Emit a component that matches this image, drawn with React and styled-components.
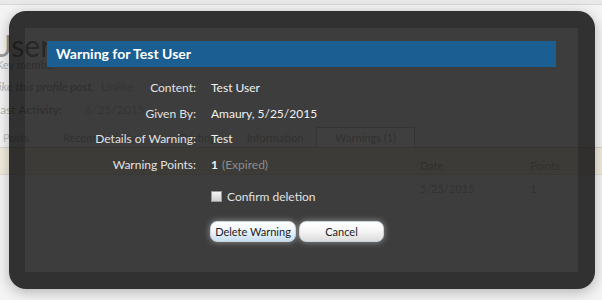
import React from 'react';
import styled, { createGlobalStyle } from 'styled-components';

const GlobalStyle = createGlobalStyle`
  html, body {
    margin: 0;
    padding: 0;
    background: #f4f4f4;
    font-family: Lato, "Liberation Sans", sans-serif;
  }
`;

const Page = styled.div`
  position: relative;
  width: 602px;
  height: 300px;
  overflow: hidden;
`;

const TopStrip = styled.div`
  height: 4px;
  background: #e9e9e9;
  border-bottom: 1px solid #d6d6d6;
`;

const Profile = styled.div`
  display: flex;
  flex-direction: column;
  padding-top: 27px;
  color: #b8b8b8;
`;

const UserName = styled.h1`
  margin: 0 0 0 -10px;
  font-size: 30px;
  font-weight: 400;
  line-height: 26px;
  color: #9a9a9a;
`;

const Meta = styled.div`
  margin-left: ${(p) => p.$shift || 0}px;
  margin-bottom: ${(p) => p.$bottom || 0}px;
  font-size: ${(p) => p.$size || 12}px;
  line-height: ${(p) => p.$lh || 23}px;
  font-style: ${(p) => (p.$italic ? 'italic' : 'normal')};
  color: #b4b4b4;

  span {
    margin-left: 6px;
    color: #cfcfcf;
    font-style: normal;
  }
`;

const Tabs = styled.div`
  display: flex;
  align-items: flex-end;
  margin-top: 6px;
  height: 20px;
  border-bottom: 1px solid #d4d4d4;
`;

const Tab = styled.div`
  padding: 0 ${(p) => p.$pad || 18}px;
  height: 19px;
  line-height: 19px;
  font-size: 11px;
  color: #c2c2c2;
  border: 1px solid ${(p) => (p.$active ? '#d2d2d2' : 'transparent')};
  border-bottom: none;
  background: ${(p) => (p.$active ? '#fafafa' : 'transparent')};
`;

const Band = styled.div`
  display: grid;
  grid-template-columns: 420px 110px 1fr;
  height: 27px;
  align-items: end;
  padding-bottom: 2px;
  box-sizing: border-box;
  background: #f2ecde;
  border-bottom: 1px solid #e4dfd2;
  font-size: 11px;
  color: #c2bcad;
`;

const DataRow = styled.div`
  display: grid;
  grid-template-columns: 420px 110px 1fr;
  height: 26px;
  align-items: center;
  font-size: 11px;
  color: #c6c6c6;
`;

const Overlay = styled.div`
  position: absolute;
  left: 9px;
  top: 11px;
  width: 586px;
  height: 278px;
  box-sizing: border-box;
  border: 17px solid rgba(0, 0, 0, 0.8);
  border-left-width: 16px;
  border-radius: 17px;
  background: rgba(0, 0, 0, 0.75);
  background-clip: padding-box;
  box-shadow: 0 3px 14px rgba(0, 0, 0, 0.28);
  padding: 13px 22px 0 22px;
`;

const TitleBar = styled.h2`
  margin: 0;
  height: 26px;
  line-height: 26px;
  padding-left: 9px;
  background: #1a5e92;
  color: #fff;
  font-size: 14px;
  font-weight: 700;
`;

const Fields = styled.dl`
  display: grid;
  grid-template-columns: 149px 1fr;
  column-gap: 15px;
  grid-auto-rows: 25.5px;
  align-items: center;
  margin: 8px 0 0;
  font-size: 12px;
`;

const Label = styled.dt`
  text-align: right;
  color: #e2e2e2;
`;

const Value = styled.dd`
  margin: 0;
  color: #f2f2f2;

  b {
    font-weight: 700;
  }

  span {
    margin-left: 4px;
    color: #8c8c8c;
  }
`;

const Confirm = styled.label`
  display: flex;
  align-items: center;
  gap: 5px;
  margin: 10px 0 0 164px;
  height: 18px;
  font-size: 12px;
  color: #e0e0e0;
`;

const Box = styled.span`
  width: 9px;
  height: 9px;
  background: linear-gradient(#f4f4f4, #cfcfcf);
  border: 1px solid #9a9a9a;
`;

const Buttons = styled.div`
  display: flex;
  gap: 3px;
  margin: 16px 0 0 163px;
`;

const Button = styled.button`
  width: ${(p) => p.$w}px;
  height: 21px;
  padding: 0;
  border: 1px solid #c8d2da;
  border-radius: 7px;
  background: ${(p) =>
    p.$primary
      ? 'linear-gradient(#ffffff, #eef5fb 45%, #c9def0)'
      : 'linear-gradient(#ffffff, #f6f6f6 45%, #dcdcdc)'};
  box-shadow: 0 0 6px rgba(255, 255, 255, 0.45);
  font-family: Lato, "Liberation Sans", sans-serif;
  font-size: 11px;
  color: #222;
`;

export default function App() {
  return (
    <Page>
      <GlobalStyle />
      <TopStrip />
      <Profile>
        <UserName>User</UserName>
        <Meta $shift={-4} $size={11} $lh={14} $bottom={3}>Key member</Meta>
        <Meta $shift={-4} $italic>
          like this profile post.<span>Unlike</span>
        </Meta>
        <Meta $shift={-6}>
          Last Activity: <span style={{ marginLeft: 20 }}>6/25/2015</span>
        </Meta>
        <Tabs>
          <Tab $pad={2}>Posts</Tab>
          <Tab $pad={30}>Recent Activity</Tab>
          <Tab $pad={12}>Postings</Tab>
          <Tab $pad={12}>Information</Tab>
          <Tab $pad={18} $active>Warnings (1)</Tab>
        </Tabs>
        <Band>
          <span />
          <span>Date</span>
          <span>Points</span>
        </Band>
        <DataRow>
          <span />
          <span>5/25/2015</span>
          <span>1</span>
        </DataRow>
      </Profile>

      <Overlay>
        <TitleBar>Warning for Test User</TitleBar>
        <Fields>
          <Label>Content:</Label>
          <Value>Test User</Value>
          <Label>Given By:</Label>
          <Value>Amaury, 5/25/2015</Value>
          <Label>Details of Warning:</Label>
          <Value>Test</Value>
          <Label>Warning Points:</Label>
          <Value>
            <b>1</b>
            <span>(Expired)</span>
          </Value>
        </Fields>
        <Confirm>
          <Box />
          Confirm deletion
        </Confirm>
        <Buttons>
          <Button $w={86} $primary>Delete Warning</Button>
          <Button $w={85}>Cancel</Button>
        </Buttons>
      </Overlay>
    </Page>
  );
}
